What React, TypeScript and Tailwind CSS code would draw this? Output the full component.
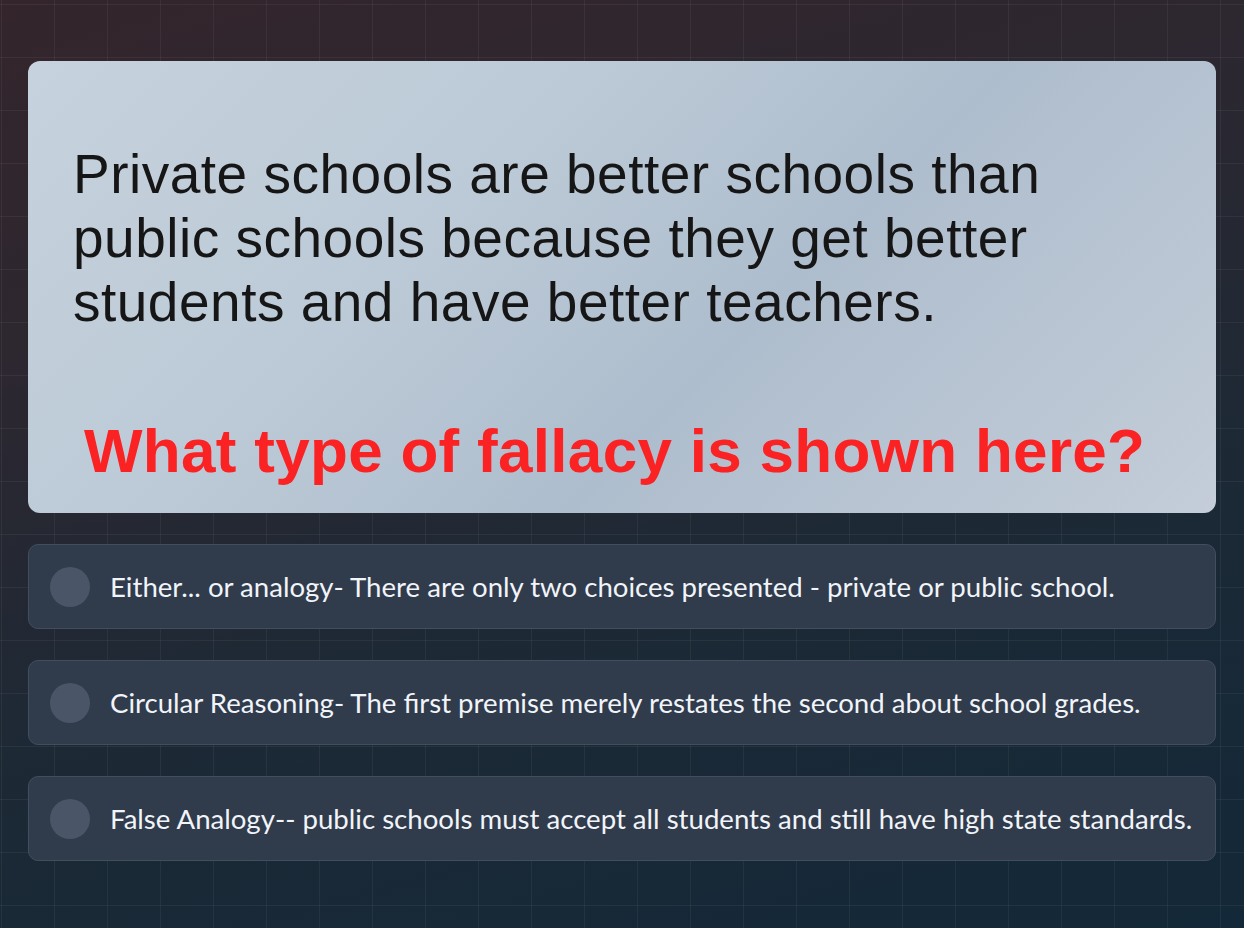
const options = [
  'Either... or analogy- There are only two choices presented - private or public school.',
  'Circular Reasoning- The first premise merely restates the second about school grades.',
  'False Analogy-- public schools must accept all students and still have high state standards.',
]

export default function App() {
  return (
    <div className="relative min-h-[928px] w-full overflow-hidden bg-[linear-gradient(165deg,#34252c_0%,#2c2730_30%,#1d2935_60%,#132838_100%)]">
      <div className="pointer-events-none absolute inset-0 bg-[linear-gradient(to_right,rgba(255,255,255,0.05)_1px,transparent_1px),linear-gradient(to_bottom,rgba(255,255,255,0.05)_1px,transparent_1px)] bg-[size:53px_53px] bg-[position:1px_4px]" />
      <div className="relative flex flex-col gap-[31px] px-[28px] pt-[61px]">
        <div className="h-[452px] rounded-xl bg-[linear-gradient(135deg,#c6d2dd_0%,#bccad7_35%,#aebdcd_60%,#c4cdd9_100%)] pl-[45px] pt-[81px] font-['Liberation_Sans',Arial,sans-serif]">
          <p className="text-[55px] leading-[64px] tracking-[0.5px] text-[#161616]">
            Private schools are better schools than
            <br />
            public schools because they get better
            <br />
            students and have better teachers.
          </p>
          <p className="mt-[85px] pl-[11px] text-[62px] font-bold leading-[64px] tracking-[0.3px] text-[#fa2222]">
            What type of fallacy is shown here?
          </p>
        </div>
        {options.map(text => (
          <div
            key={text}
            className="flex h-[85px] items-center gap-[20px] rounded-[10px] border border-[#424d5e] bg-[#303b4c] pl-[21px] font-['Lato','Noto_Sans',sans-serif]"
          >
            <span className="h-[40px] w-[40px] shrink-0 rounded-full bg-[#4a5568]" />
            <span className="whitespace-nowrap text-[27.6px] text-[#f1f4f8]">{text}</span>
          </div>
        ))}
      </div>
    </div>
  )
}
